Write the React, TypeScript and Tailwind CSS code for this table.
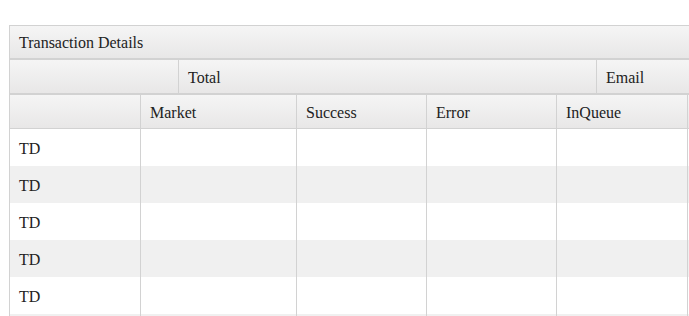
import React from 'react';

const cols = [
  { label: '', w: 'w-[131px]' },
  { label: 'Market', w: 'w-[156px]' },
  { label: 'Success', w: 'w-[130px]' },
  { label: 'Error', w: 'w-[130px]' },
  { label: 'InQueue', w: 'w-[131px]' },
  { label: '', w: 'w-[120px]' },
];

// last row only peeks in below the fold, so it carries no text
const rows = ['TD', 'TD', 'TD', 'TD', 'TD', ''];

const headBg = 'bg-gradient-to-b from-[#f5f5f5] to-[#e8e7e7]';

const App: React.FC = () => {
  return (
    <div
      className="w-[689px] h-[316px] overflow-hidden bg-white pt-[25px] pl-[9px] text-[16px] leading-none text-[#222]"
      style={{ fontFamily: '"Liberation Serif", serif' }}
    >
      <div className="w-[800px] border-l border-[#d2d2d2]">
        {/* caption row */}
        <div className={`h-[35px] flex items-center pl-[9px] pt-[2px] border-t border-b-2 border-[#d2d2d2] ${headBg}`}>
          Transaction Details
        </div>

        {/* group row */}
        <div className={`h-[35px] flex border-b-2 border-[#d2d2d2] ${headBg}`}>
          <div className="w-[169px] border-r border-[#d2d2d2]" />
          <div className="w-[418px] flex items-center pl-[9px] pt-[2px] border-r border-[#d2d2d2]">Total</div>
          <div className="flex-1 flex items-center pl-[9px] pt-[2px]">Email</div>
        </div>

        {/* column header row */}
        <div className={`h-[34px] flex border-b border-[#d2d2d2] ${headBg}`}>
          {cols.map((c, i) => (
            <div key={i} className={`${c.w} flex items-center pl-[9px] pt-[2px] border-r border-[#d2d2d2]`}>
              {c.label}
            </div>
          ))}
        </div>

        {rows.map((r, ri) => (
          <div key={ri} className={`h-[37px] flex ${ri % 2 === 1 ? 'bg-[#f0f0f0]' : 'bg-white'}`}>
            {cols.map((c, i) => (
              <div key={i} className={`${c.w} flex items-center pl-[9px] pt-[2px] border-r border-[#d2d2d2]`}>
                {i === 0 ? r : ''}
              </div>
            ))}
          </div>
        ))}
      </div>
    </div>
  );
};

export default App;
